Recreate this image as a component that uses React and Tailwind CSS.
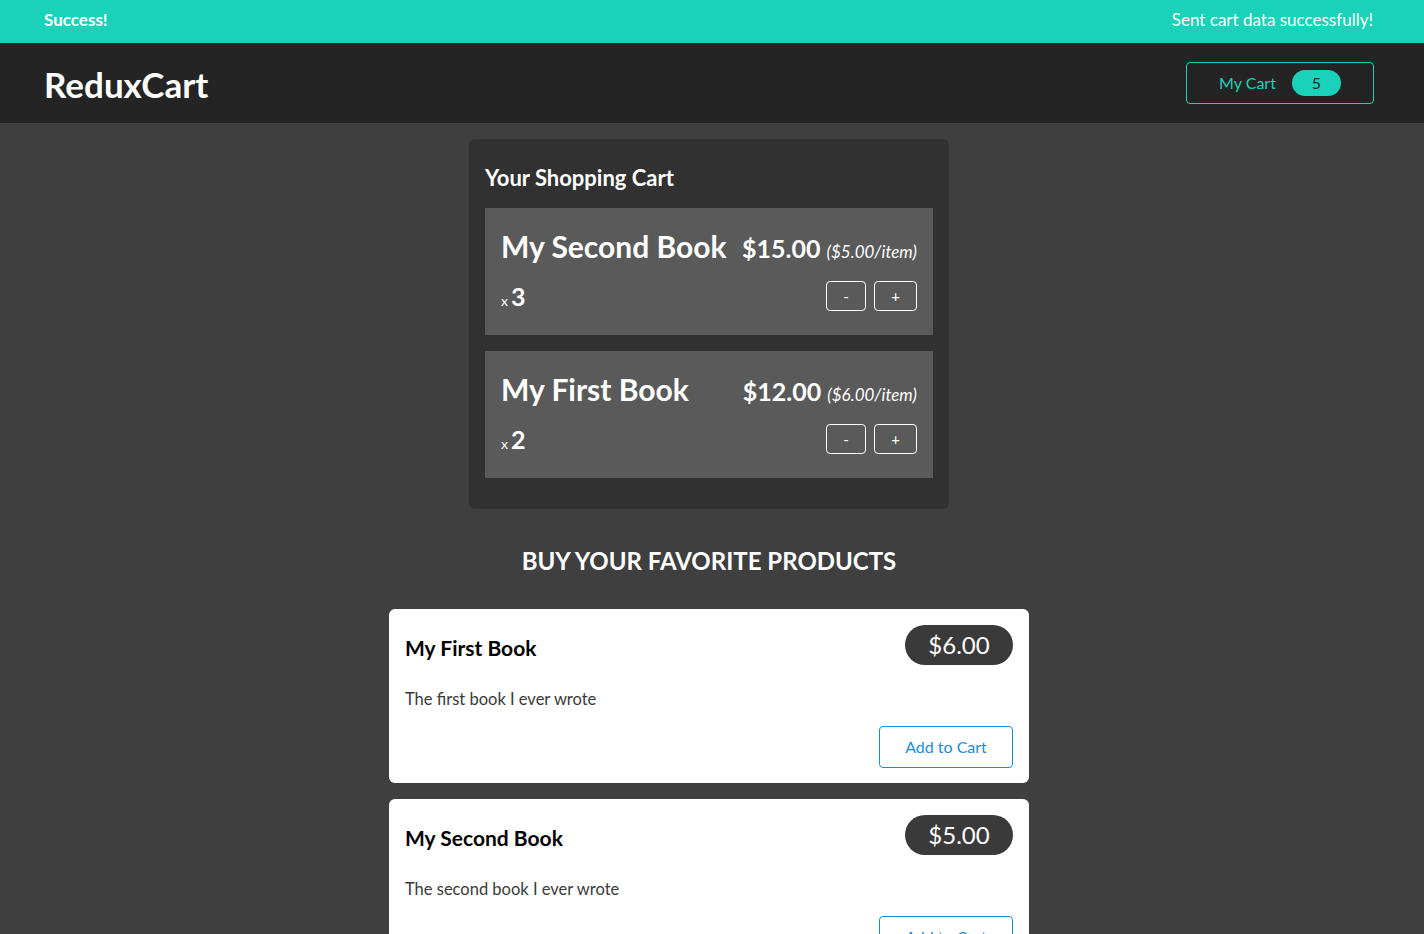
import React from "react";

const cartItems = [
  { id: "p2", title: "My Second Book", total: 15, price: 5, quantity: 3 },
  { id: "p1", title: "My First Book", total: 12, price: 6, quantity: 2 },
];

const products = [
  { id: "p1", title: "My First Book", price: 6, description: "The first book I ever wrote" },
  { id: "p2", title: "My Second Book", price: 5, description: "The second book I ever wrote" },
];

const font = { fontFamily: "Lato, 'Open Sans', sans-serif" };

const CartItem = ({ item }) => (
  <li className="bg-[#5a5a5a] px-4 pt-4 pb-6 text-white">
    <header className="flex items-baseline justify-between">
      <h3 className="text-[30px] font-bold leading-[45px]">{item.title}</h3>
      <div className="text-[25px] font-bold">
        ${item.total.toFixed(2)}{" "}
        <span className="text-[17px] font-normal italic">(${item.price.toFixed(2)}/item)</span>
      </div>
    </header>
    <div className="mt-[12px] flex items-center justify-between">
      <div className="flex items-baseline">
        <span className="text-[14px] mr-[3px]">x</span>
        <span className="text-[25px] font-bold leading-[30px]">{item.quantity}</span>
      </div>
      <div className="flex gap-2">
        <button className="h-[30px] w-[40px] rounded border border-white text-[15px] text-white">-</button>
        <button className="h-[30px] w-[43px] rounded border border-white text-[15px] text-white">+</button>
      </div>
    </div>
  </li>
);

const ProductItem = ({ product }) => (
  <li className="rounded-md bg-white px-4 pt-4 pb-[15px]">
    <header className="flex items-center justify-between">
      <h3 className="pt-[6px] text-[21px] font-bold text-black">{product.title}</h3>
      <div className="flex h-[40px] w-[108px] items-center justify-center rounded-full bg-[#3a3a3a] text-[24px] text-white">
        ${product.price.toFixed(2)}
      </div>
    </header>
    <p className="mt-[22px] text-[16.5px] text-[#3a3a3a]">{product.description}</p>
    <div className="mt-[14px] flex justify-end">
      <button className="h-[42px] w-[134px] rounded border border-[#1a8ed1] text-[16px] text-[#1a8ed1]">
        Add to Cart
      </button>
    </div>
  </li>
);

export default function App() {
  return (
    <div className="min-h-screen bg-[#3f3f3f]" style={font}>
      <div className="flex h-[43px] items-center justify-between bg-[#1ad1b9] pb-[4px] pl-[44px] pr-[51px] text-white">
        <h2 className="text-[17px] font-bold">Success!</h2>
        <p className="text-[17px]">Sent cart data successfully!</p>
      </div>
      <header className="flex h-[80px] items-center justify-between bg-[#252424] pl-[44px] pr-[50px]">
        <h1 className="pt-[3px] text-[35px] font-bold text-white">ReduxCart</h1>
        <button className="flex h-[42px] w-[188px] items-center justify-center gap-4 rounded border border-[#1ad1b9] text-[16px] text-[#1ad1b9]">
          <span>My Cart</span>
          <span className="flex h-[26px] w-[49px] items-center justify-center rounded-full bg-[#1ad1b9] text-[#252424]">5</span>
        </button>
      </header>
      <main className="pr-[6px]">
        <section className="mx-auto mt-4 w-[480px] rounded-md bg-[#313131] p-4 pb-[31px] text-white">
          <h2 className="mt-[6px] mb-[14px] text-[22px] font-bold">Your Shopping Cart</h2>
          <ul className="flex flex-col gap-4">
            {cartItems.map((item) => (
              <CartItem key={item.id} item={item} />
            ))}
          </ul>
        </section>
        <section className="mx-auto w-[640px] pb-8">
          <h2 className="mt-[34px] mb-[30px] text-center text-[24px] font-bold uppercase text-white">
            Buy your favorite products
          </h2>
          <ul className="flex flex-col gap-4">
            {products.map((product) => (
              <ProductItem key={product.id} product={product} />
            ))}
          </ul>
        </section>
      </main>
    </div>
  );
}
